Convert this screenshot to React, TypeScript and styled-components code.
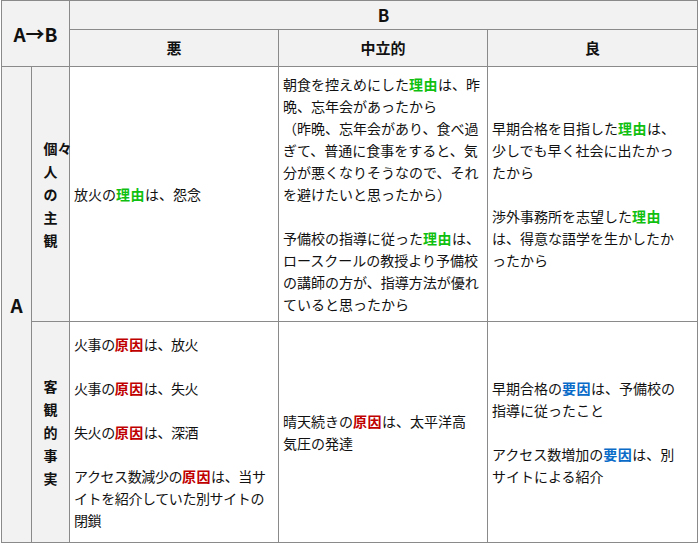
import React from "react";
import styled, { createGlobalStyle } from "styled-components";

const G = createGlobalStyle`
  body { margin: 0; background: #fff; font-family: "Noto Sans CJK JP", "Noto Sans", sans-serif; color: #111; }
`;

const Table = styled.table`
  border-collapse: collapse;
  margin: 0 0 0 1px;
  table-layout: fixed;
  width: 697px;
  font-size: 14px;
  line-height: 22px;
  td, th { border: 1.5px solid #8a8a8a; }
`;
const Head = styled.th<{ $size?: number }>`
  background: #f2f2f2;
  font-weight: bold;
  font-size: ${(p) => p.$size ?? 15}px;
  text-align: center;
  vertical-align: middle;
  padding: 0;
  white-space: nowrap;
`;
const Side = styled.th`
  background: #f2f2f2;
  font-size: 14px;
  line-height: 23px;
  font-weight: bold;
  vertical-align: middle;
  padding: 0;
`;
const Stack = styled.span`
  display: block;
  width: 1em;
  margin: 0 auto;
  word-break: break-all;
`;
const Cell = styled.td<{ $pr?: number; $ls?: number }>`
  vertical-align: middle;
  padding: 4px ${(p) => p.$pr ?? 4}px 4px 4px;
  letter-spacing: ${(p) => p.$ls ?? 0}px;
  word-break: break-all;
`;
const P = styled.p`
  margin: 0 0 22px;
  &:last-child { margin-bottom: 0; }
`;
const Key = styled.b<{ $c: string }>`
  color: ${(p) => p.$c};
  letter-spacing: 0.5px;
`;
const Riyu = () => <Key $c="#10c010">理由</Key>;
const Genin = () => <Key $c="#c00000">原因</Key>;
const Youin = () => <Key $c="#0a6bc8">要因</Key>;

export default function App() {
  return (
    <>
      <G />
      <Table>
        <colgroup>
          <col style={{ width: 30 }} />
          <col style={{ width: 38 }} />
          <col style={{ width: 209 }} />
          <col style={{ width: 209 }} />
          <col style={{ width: 210 }} />
        </colgroup>
        <tbody>
          <tr style={{ height: 29 }}>
            <Head colSpan={2} rowSpan={2} $size={19}>A→B</Head>
            <Head colSpan={3} $size={17}>B</Head>
          </tr>
          <tr style={{ height: 37 }}>
            <Head>悪</Head>
            <Head>中立的</Head>
            <Head>良</Head>
          </tr>
          <tr style={{ height: 255 }}>
            <Head rowSpan={2} $size={19}>A</Head>
            <Side><Stack>個々人の主観</Stack></Side>
            <Cell>放火の<Riyu />は、怨念</Cell>
            <Cell $pr={2}>
              <P>朝食を控えめにした<Riyu />は、昨晩、忘年会があったから<br />（昨晩、忘年会があり、食べ過ぎて、普通に食事をすると、気分が悪くなりそうなので、それを避けたいと思ったから）</P>
              <P>予備校の指導に従った<Riyu />は、ロースクールの教授より予備校の講師の方が、指導方法が優れていると思ったから</P>
            </Cell>
            <Cell $pr={10}>
              <P>早期合格を目指した<Riyu />は、少しでも早く社会に出たかったから</P>
              <P>渉外事務所を志望した<Riyu />は、得意な語学を生かしたかったから</P>
            </Cell>
          </tr>
          <tr style={{ height: 221 }}>
            <Side><Stack>客観的事実</Stack></Side>
            <Cell $ls={-0.4} $pr={2}>
              <P>火事の<Genin />は、放火</P>
              <P>火事の<Genin />は、失火</P>
              <P>失火の<Genin />は、深酒</P>
              <P>アクセス数減少の<Genin />は、当サイトを紹介していた別サイトの閉鎖</P>
            </Cell>
            <Cell $pr={12}>晴天続きの<Genin />は、太平洋高気圧の発達</Cell>
            <Cell $pr={12}>
              <P>早期合格の<Youin />は、予備校の指導に従ったこと</P>
              <P>アクセス数増加の<Youin />は、別サイトによる紹介</P>
            </Cell>
          </tr>
        </tbody>
      </Table>
    </>
  );
}
